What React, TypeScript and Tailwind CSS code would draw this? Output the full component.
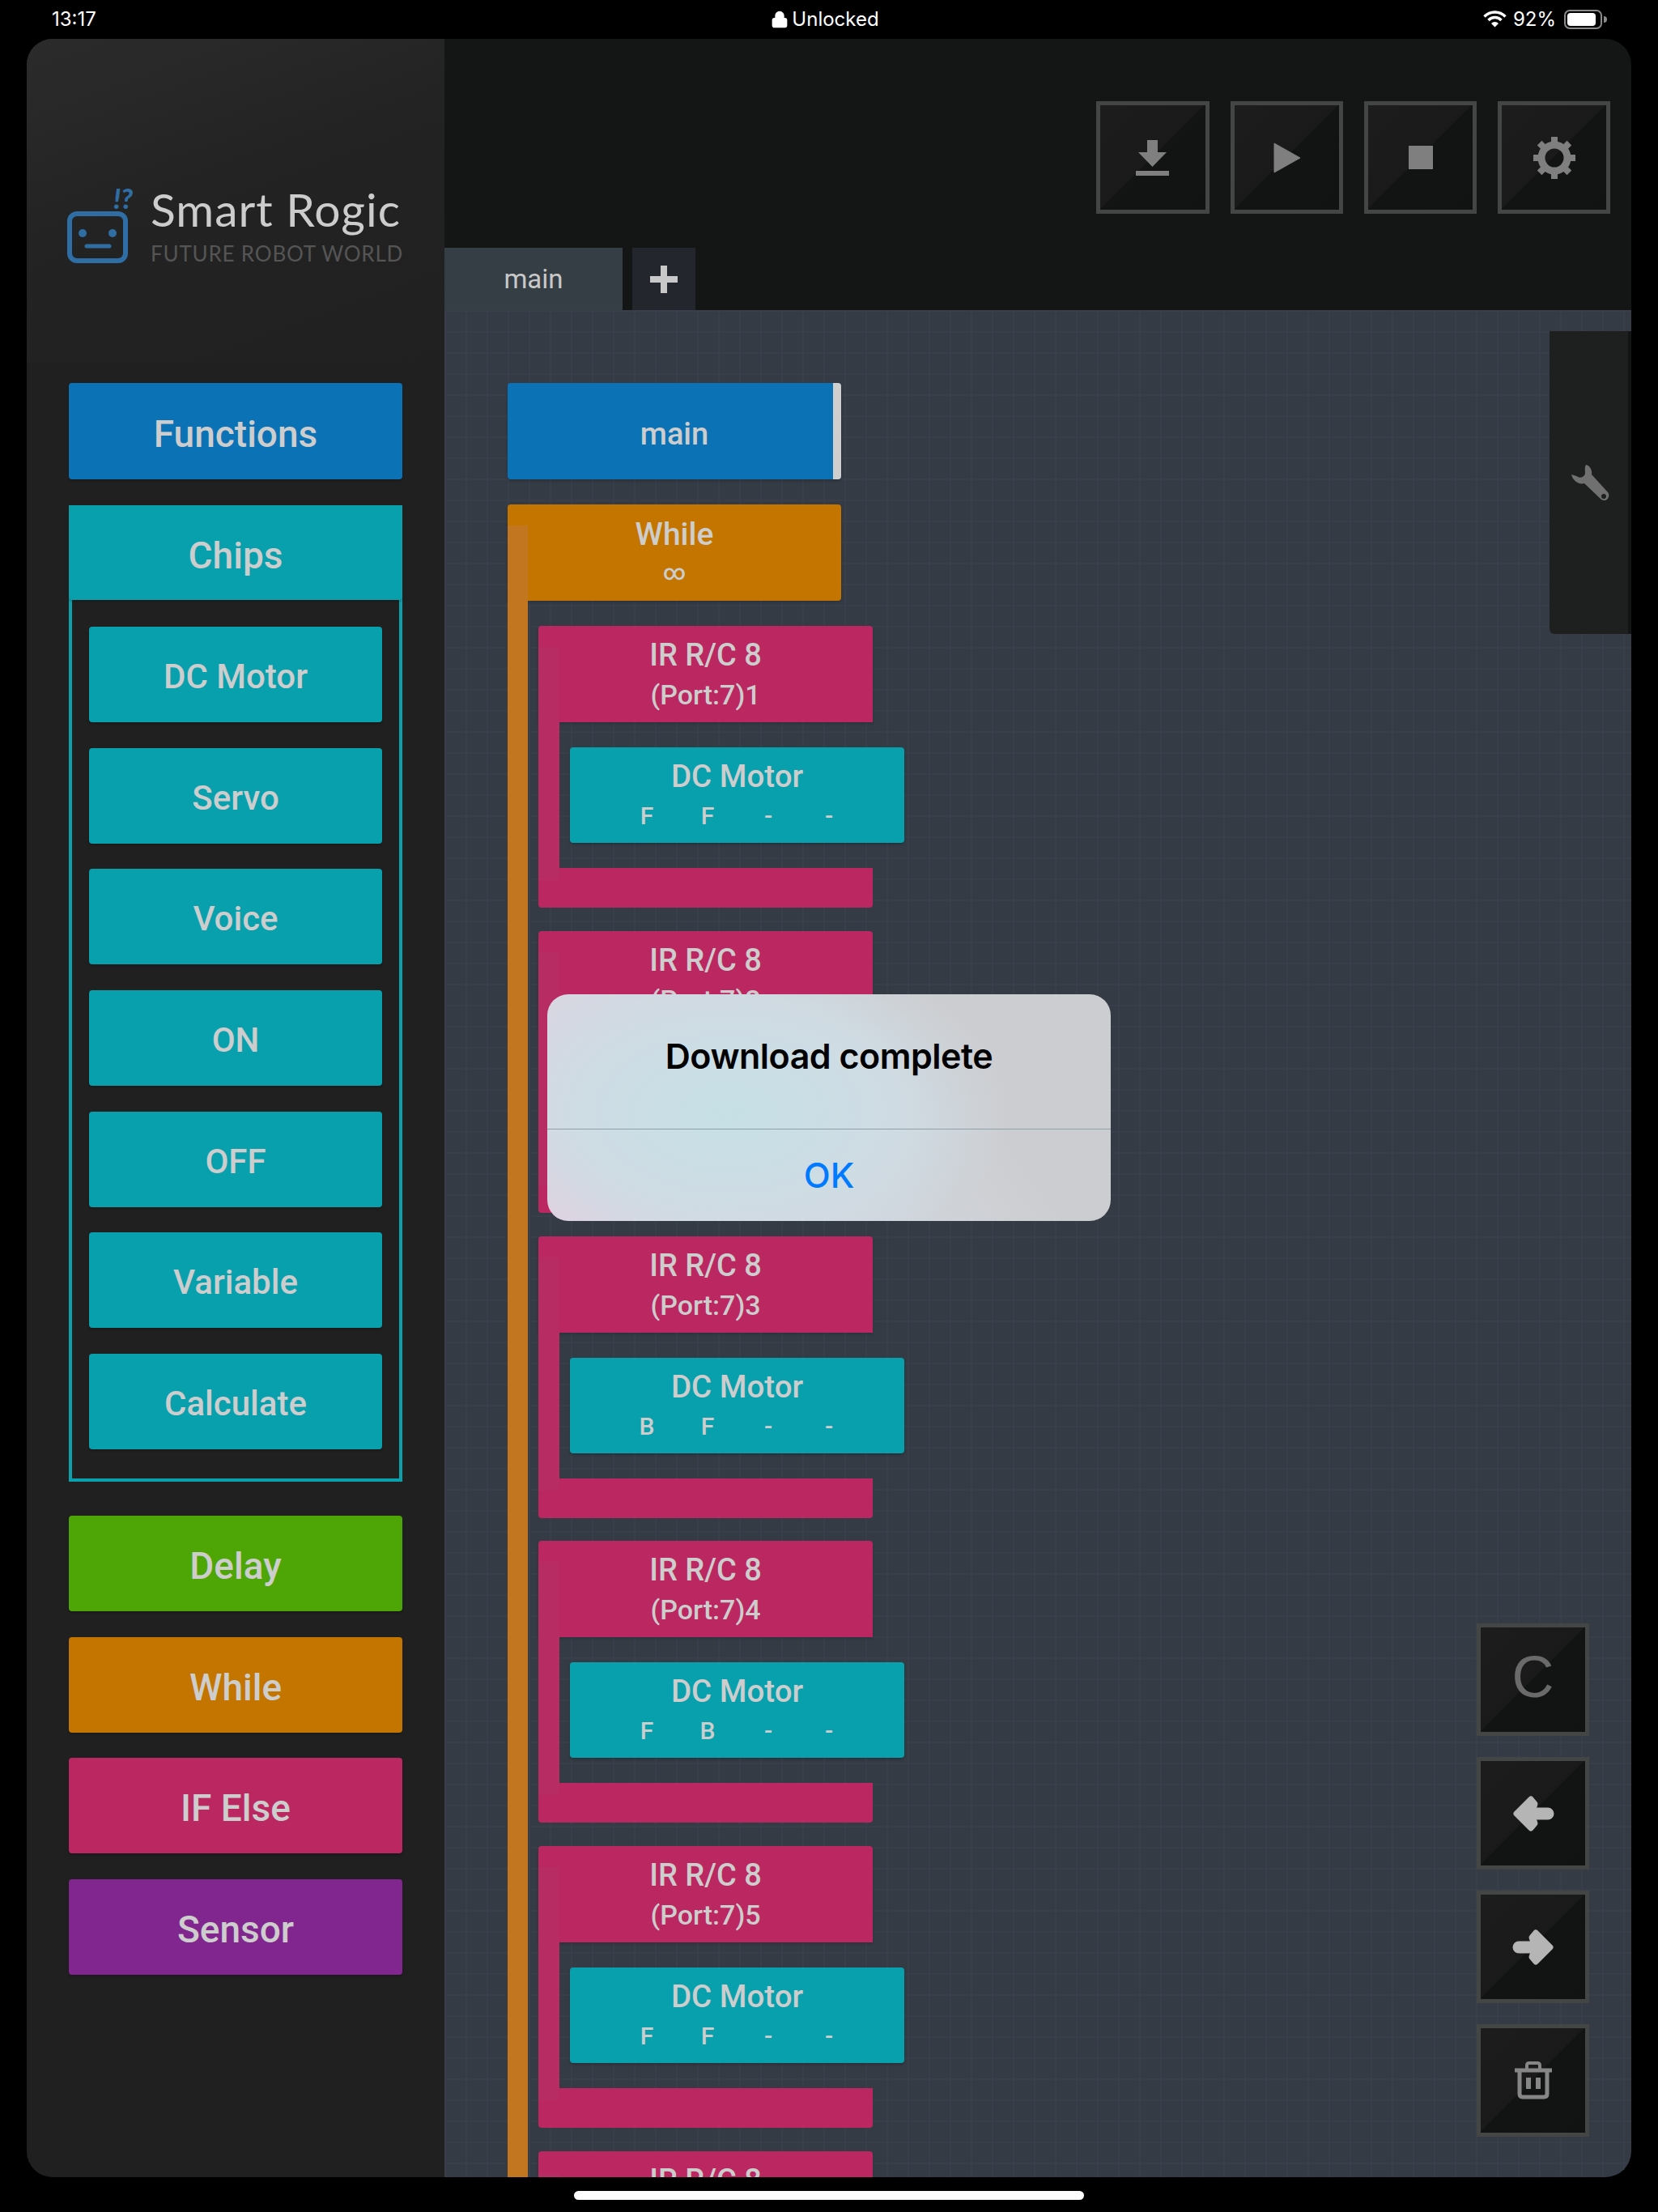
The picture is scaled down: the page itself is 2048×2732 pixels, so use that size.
import type { ReactNode } from 'react';
import { Lock } from 'lucide-react';

const font = { fontFamily: 'Roboto, "Noto Sans", sans-serif' };

const SideBtn = ({ label, color, size = 'h-[118px]', text = 'text-[42px]' }: { label: string; color: string; size?: string; text?: string }) => (
  <div className={`${color} ${size} ${text} flex items-center justify-center rounded-[4px] pt-[6px] leading-none font-medium text-[#cdcdcd] shadow-[0_2px_3px_rgba(0,0,0,0.2)]`}>
    {label}
  </div>
);

const ToolBtn = ({ children, className }: { children: ReactNode; className: string }) => (
  <div className={`${className} flex items-center justify-center border-[5px] border-[#444545] bg-[linear-gradient(135deg,#1d1d1d_0%,#1a1a1a_49%,#121313_50%,#111212_100%)]`}>
    {children}
  </div>
);

const DcMotor = ({ a, b }: { a: string; b: string }) => (
  <div className="ml-[13px] flex h-[118px] w-[413px] flex-col items-center rounded-[4px] bg-[#09a0ae] pt-[16px] font-medium text-[#cdcdcd] shadow-[0_2px_3px_rgba(0,0,0,0.2)]">
    <div className="text-[38.5px] leading-[40px]">DC Motor</div>
    <div className="mt-[13px] flex pl-[2px] text-[30px] leading-[32px]">
      {[a, b, '-', '-'].map((v, i) => (
        <span key={i} className="w-[75px] text-center">{v}</span>
      ))}
    </div>
  </div>
);

const IfBlock = ({ port, a, b }: { port: number; a: string; b: string }) => (
  <div className="relative">
    <div className="absolute top-[26px] bottom-[34px] left-0 w-[26px] bg-[#b72c63]" />
    <div className="flex h-[119px] w-[413px] flex-col items-center rounded-t-[4px] bg-[#bb2761] pt-[16px] font-medium text-[#cdcdcd] shadow-[0_2px_3px_rgba(0,0,0,0.15)]">
      <div className="relative text-[38px] leading-[40px]">IR R/C 8</div>
      <div className="relative mt-[11px] text-[34px] leading-[36px]">(Port:7){port}</div>
    </div>
    <div className="flex h-[180px] items-center pl-[26px]">
      <DcMotor a={a} b={b} />
    </div>
    <div className="h-[49px] w-[413px] rounded-b-[4px] bg-[#bb2761]" />
  </div>
);

const Gear = () => (
  <svg width="52" height="52" viewBox="0 0 52 52" fill="#7f7f7f">
    <circle cx="26" cy="26" r="16" fill="none" stroke="#7f7f7f" strokeWidth="9" />
    {[0, 45, 90, 135, 180, 225, 270, 315].map((r) => (
      <rect key={r} x="22" y="0" width="8" height="9" transform={`rotate(${r} 26 26)`} />
    ))}
  </svg>
);

const Wrench = () => (
  <svg width="48" height="47" viewBox="0 0 48 47" fill="#707070">
    <path d="M19 1 C24 2 27 8 26 13 L46 35 C50 40 44 48 38 44 L17 24 C10 26 3 21 1 13 C3 14 6 14 9 16 C12 18 17 16 18 12 C18 8 17 5 19 1 Z" />
    <circle cx="41" cy="40" r="3" fill="#1e2020" />
  </svg>
);

const ArrowLeft = () => (
  <svg width="52" height="46" viewBox="0 0 52 46" fill="#b5b5b5" stroke="#b5b5b5" strokeLinejoin="round" strokeLinecap="round">
    <path d="M5 23 L23 5 L28 11 L24 23 L28 35 L23 41 Z" strokeWidth="7" />
    <path d="M20 23 L44 23" strokeWidth="15" />
  </svg>
);

const ArrowRight = () => (
  <svg width="52" height="46" viewBox="0 0 52 46" fill="#b5b5b5" stroke="#b5b5b5" strokeLinejoin="round" strokeLinecap="round">
    <path d="M47 23 L29 5 L24 11 L28 23 L24 35 L29 41 Z" strokeWidth="7" />
    <path d="M32 23 L8 23" strokeWidth="15" />
  </svg>
);

const Trash = () => (
  <svg width="46" height="47" viewBox="0 0 46 47" fill="none" stroke="#868686" strokeWidth="5">
    <path d="M0 11 H46" />
    <path d="M15 10 V5 Q15 2 18 2 H28 Q31 2 31 5 V10" strokeWidth="4" />
    <path d="M6 11 V40 Q6 44 10 44 H36 Q40 44 40 40 V11" />
    <rect x="14" y="20" width="6" height="14" fill="#868686" stroke="none" />
    <rect x="26" y="20" width="6" height="14" fill="#868686" stroke="none" />
  </svg>
);

export default function App() {
  return (
    <div className="relative h-[2732px] w-[2048px] overflow-hidden bg-black" style={font}>
      {/* status bar */}
      <div className="grid h-[48px] grid-cols-[1fr_auto_1fr] items-center pb-[1px] text-[24px] text-white" style={{ fontFamily: 'Inter, sans-serif' }}>
        <div className="pl-[64px]">13:17</div>
        <div className="flex -translate-x-[5px] items-center gap-[4px]">
          <Lock size={22} fill="white" strokeWidth={2.4} />
          <span>Unlocked</span>
        </div>
        <div className="flex items-center justify-end pr-[63px]">
          <svg width="29" height="21" viewBox="0 0 29 21" fill="none" stroke="white" strokeWidth="3.4">
            <path d="M1.5 7.5 A 18 18 0 0 1 27.5 7.5" />
            <path d="M6.5 12 A 11 11 0 0 1 22.5 12" />
            <path d="M14.5 20.5 L10 16 A 6 6 0 0 1 19 16 Z" fill="white" stroke="none" />
          </svg>
          <span className="ml-[8px]">92%</span>
          <div className="ml-[10px] flex h-[24px] w-[47px] items-center rounded-[7px] border-2 border-[#8a8a8a] p-[2px]">
            <div className="h-full w-[90%] rounded-[4px] bg-white" />
          </div>
          <div className="ml-[2px] h-[8px] w-[4px] rounded-r-full bg-[#8a8a8a]" />
        </div>
      </div>

      {/* app frame */}
      <div className="ml-[33px] flex h-[2641px] w-[1982px] overflow-hidden rounded-[32px]">
        <aside className="w-[516px] shrink-0 bg-[#202020]">
          <div className="flex h-[400px] items-start bg-[linear-gradient(160deg,#2b2b2b_0%,#232323_45%,#202020_100%)] pt-[182px] pl-[50px]">
            <svg width="88" height="95" viewBox="0 0 88 95" fill="none">
              <rect x="3" y="34" width="69" height="58" rx="9" stroke="#2f6ea5" strokeWidth="6" />
              <circle cx="19" cy="58" r="5" fill="#2f6ea5" />
              <circle cx="56" cy="58" r="5" fill="#2f6ea5" />
              <path d="M24 74 H52" stroke="#2f6ea5" strokeWidth="5" strokeLinecap="round" />
              <text x="57" y="28" fill="#2f6ea5" fontSize="34" fontWeight="900" fontStyle="italic" style={{ fontFamily: 'Lato, sans-serif' }}>!?</text>
            </svg>
            <div className="ml-[15px] -mt-[4px]" style={{ fontFamily: 'Lato, sans-serif' }}>
              <div className="text-[57px] leading-[64px] tracking-[1px] whitespace-nowrap text-[#cccccc]">Smart Rogic</div>
              <div className="mt-[9px] text-[26px] leading-[28px] tracking-[0.8px] whitespace-nowrap text-[#555555]">FUTURE ROBOT WORLD</div>
            </div>
          </div>

          <div className="flex flex-col px-[52px] pt-[25px]">
            <SideBtn label="Functions" color="bg-[#0c72b6]" size="h-[119px]" text="text-[46px]" />
            <div className="mt-[32px] h-[1206px] border-x-4 border-b-4 border-[#0aa0ae]">
              <div className="-mx-[4px]"><SideBtn label="Chips" color="bg-[#09a0ae]" size="h-[117px]" text="text-[46px]" /></div>
              <div className="flex flex-col gap-[31.7px] px-[21px] pt-[33px]">
                {['DC Motor', 'Servo', 'Voice', 'ON', 'OFF', 'Variable', 'Calculate'].map((l) => (
                  <SideBtn key={l} label={l} color="bg-[#09a0ae]" />
                ))}
              </div>
            </div>
            <div className="mt-[42px] flex flex-col gap-[31.7px]">
              <SideBtn label="Delay" color="bg-[#4ea606]" text="text-[46px]" />
              <SideBtn label="While" color="bg-[#c47500]" text="text-[46px]" />
              <SideBtn label="IF Else" color="bg-[#bb2761]" text="text-[46px]" />
              <SideBtn label="Sensor" color="bg-[#82268f]" text="text-[46px]" />
            </div>
          </div>
        </aside>

        <main className="flex min-w-0 flex-1 flex-col">
          <div className="relative h-[335px] shrink-0 bg-[#141615]">
            <div className="flex justify-end gap-[26px] pt-[77px] pr-[26px]">
              <ToolBtn className="h-[139px] w-[140px]">
                <svg width="42" height="44" viewBox="0 0 42 44" fill="#7f7f7f">
                  <path d="M14 0 H27 V15 H38 L20.5 33 L3 15 H14 Z" />
                  <rect x="0" y="38" width="41" height="6" />
                </svg>
              </ToolBtn>
              <ToolBtn className="h-[139px] w-[139px]">
                <svg width="33" height="38" viewBox="0 0 33 38" fill="#7f7f7f"><path d="M1 1 L33 19 L1 37 Z" stroke="#7f7f7f" strokeLinejoin="round" /></svg>
              </ToolBtn>
              <ToolBtn className="h-[139px] w-[139px]">
                <div className="h-[29px] w-[30px] bg-[#7f7f7f]" />
              </ToolBtn>
              <ToolBtn className="h-[139px] w-[139px]"><Gear /></ToolBtn>
            </div>
            <div className="absolute bottom-0 left-0 flex gap-[12px]">
              <div className="flex h-[77px] w-[220px] items-center justify-center bg-[#353d45] text-[33px] font-normal text-[#c8c8c8]">main</div>
              <div className="flex h-[77px] w-[78px] items-center justify-center bg-[#24262e]">
                <svg width="34" height="34" viewBox="0 0 34 34" fill="#c8c8c8"><path d="M13 0 H21 V13 H34 V21 H21 V34 H13 V21 H0 V13 H13 Z" /></svg>
              </div>
            </div>
          </div>

          <div className="relative min-h-0 flex-1 overflow-hidden bg-[#343b45] bg-[linear-gradient(#383f4a_2px,transparent_2px),linear-gradient(90deg,#383f4a_2px,transparent_2px)] bg-[size:26px_26px] pt-[90px] pl-[78px]">
            <div className="relative flex h-[119px] w-[412px] items-center justify-center rounded-[4px] bg-[#0c72b6] pt-[6px] text-[38px] leading-none font-medium text-[#cdcdcd] shadow-[0_2px_3px_rgba(0,0,0,0.2)]">
              main
              <div className="absolute inset-y-0 right-0 w-[10px] rounded-r-[4px] bg-[#cfcfcf]" />
            </div>

            <div className="relative mt-[31px]">
              <div className="absolute top-[26px] bottom-0 left-0 z-10 w-[25px] bg-[#c1761f]" />
              <div className="flex h-[119px] w-[412px] flex-col items-center rounded-[4px] bg-[#c47500] pt-[17px] font-medium text-[#cdcdcd] shadow-[0_2px_3px_rgba(0,0,0,0.15)]">
                <div className="text-[39px] leading-[40px]">While</div>
                <div className="mt-[11px] text-[27px] leading-[32px]">∞</div>
              </div>
              <div className="mt-[31px] ml-[38px] flex h-[2200px] flex-col gap-[28.8px]">
                <IfBlock port={1} a="F" b="F" />
                <IfBlock port={2} a="F" b="F" />
                <IfBlock port={3} a="B" b="F" />
                <IfBlock port={4} a="F" b="B" />
                <IfBlock port={5} a="F" b="F" />
                <IfBlock port={6} a="F" b="F" />
              </div>
            </div>

            <div className="absolute top-[26px] right-0 z-20 flex h-[374px] w-[101px] items-center justify-center rounded-bl-[6px] border-r-4 border-[#131515] bg-[#1e2020] pl-[2px]">
              <Wrench />
            </div>

            <div className="absolute right-[52px] bottom-[50px] z-20 flex flex-col gap-[26px]">
              <ToolBtn className="h-[139px] w-[139px]">
                <span className="-mt-[8px] text-[72px] leading-none text-[#6a6a6a]" style={{ fontFamily: '"Liberation Sans", sans-serif' }}>C</span>
              </ToolBtn>
              <ToolBtn className="h-[139px] w-[139px]"><ArrowLeft /></ToolBtn>
              <ToolBtn className="h-[139px] w-[139px]"><ArrowRight /></ToolBtn>
              <ToolBtn className="h-[139px] w-[139px]"><Trash /></ToolBtn>
            </div>
          </div>
        </main>
      </div>

      <div className="mx-auto mt-[17px] h-[11px] w-[630px] rounded-full bg-white" />

      {/* alert */}
      <div className="absolute top-[1228px] left-[676px] z-30 h-[280px] w-[696px] overflow-hidden rounded-[26px] bg-[#cccdd0] bg-[radial-gradient(ellipse_50%_75%_at_32%_52%,#c6e0e6_0%,#cfdce4_55%,transparent_100%),linear-gradient(55deg,#e4cede_0%,#dad5e1_22%,#d0d4da_50%,#cccdd0_72%,#cccdd0_100%)]" style={{ fontFamily: 'Inter, "Liberation Sans", sans-serif' }}>
        <div className="flex h-[166px] items-center justify-center pb-[13px] text-[43px] font-semibold tracking-[-0.5px] text-black">Download complete</div>
        <div className="h-[1px] bg-[#8ea0a8]" />
        <div className="flex h-[113px] items-center justify-center text-[43px] font-medium text-[#007aff]">OK</div>
      </div>
    </div>
  );
}
